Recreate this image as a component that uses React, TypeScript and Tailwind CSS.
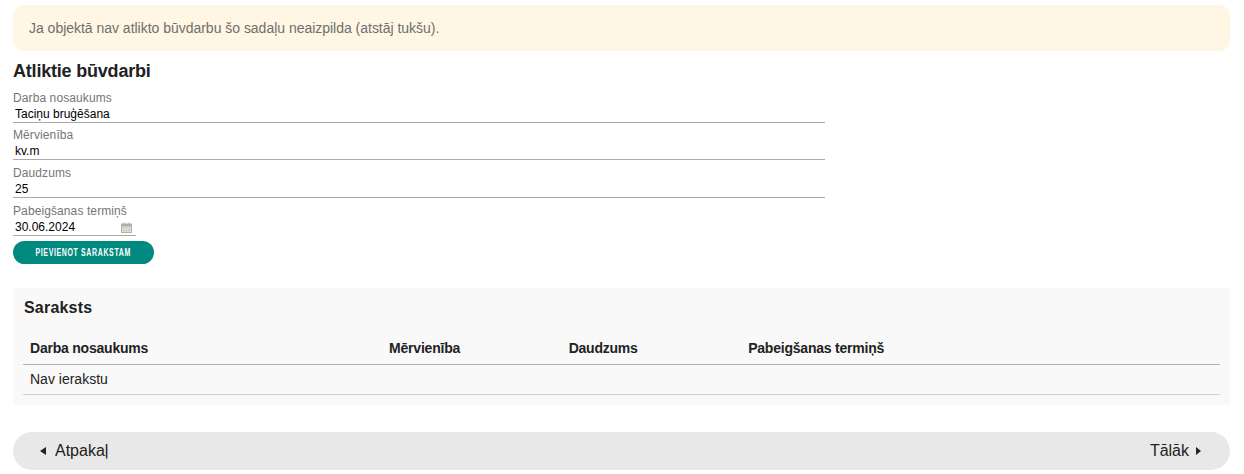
const labelCls = "block text-xs leading-[15px] tracking-[0.1px] text-[#757575]";
const inputCls = "block w-full h-[17px] border-b border-[#aaaaaa] pl-[2px] text-xs leading-[16px] text-black";

function Field({ label, value, mb }: { label: string; value: string; mb: string }) {
  return (
    <div className={mb}>
      <label className={labelCls}>{label}</label>
      <div className={inputCls}>{value}</div>
    </div>
  );
}

function CalendarIcon() {
  return (
    <svg width="11" height="11" viewBox="0 0 11 11" className="text-[#b5aea6]">
      <rect x="0.5" y="2" width="10" height="8.5" fill="#e4e0da" stroke="currentColor" />
      <rect x="0.5" y="2" width="10" height="2.5" fill="currentColor" />
      <rect x="2.5" y="0.5" width="1" height="2" fill="currentColor" />
      <rect x="7.5" y="0.5" width="1" height="2" fill="currentColor" />
      <path d="M2 6h1.5M4.75 6h1.5M7.5 6h1.5M2 8.5h1.5M4.75 8.5h1.5M7.5 8.5h1.5" stroke="currentColor" />
    </svg>
  );
}

export default function App() {
  const columns = [
    { label: "Darba nosaukums", width: "w-[30%]" },
    { label: "Mērvienība", width: "w-[15%]" },
    { label: "Daudzums", width: "w-[15%]" },
    { label: "Pabeigšanas termiņš", width: "w-[40%]" },
  ];

  return (
    <div className="w-[1244px] h-[474px] overflow-hidden bg-white pt-[5px] pr-[14px] pl-[13px] font-['Liberation_Sans',Arial,sans-serif]">
      <div className="h-[46px] rounded-[10px] bg-[#fff6e3] pl-4 text-sm leading-[46px] tracking-[-0.02px] text-[#6f6f6f]">
        Ja objektā nav atlikto būvdarbu šo sadaļu neaizpilda (atstāj tukšu).
      </div>

      <h2 className="mt-[9px] text-lg leading-[22px] font-bold tracking-[-0.2px] text-[#222222]">Atliktie būvdarbi</h2>

      <div className="mt-[9px] w-[812px]">
        <Field label="Darba nosaukums" value="Taciņu bruģēšana" mb="mb-[5px]" />
        <Field label="Mērvienība" value="kv.m" mb="mb-[6px]" />
        <Field label="Daudzums" value="25" mb="mb-[6px]" />
      </div>

      <div className="w-[123px]">
        <label className={labelCls}>Pabeigšanas termiņš</label>
        <div className="flex h-[17px] items-center justify-between border-b border-[#aaaaaa] pr-[4px] pl-[2px] text-xs leading-[16px] text-black">
          <span>30.06.2024</span>
          <CalendarIcon />
        </div>
      </div>

      <button className="mt-[5px] block h-[23px] w-[141px] rounded-full bg-[#00897f] text-center text-[10px] leading-[21px] font-bold tracking-[0.9px] text-white">
        <span className="inline-block scale-x-[0.7] whitespace-nowrap">PIEVIENOT SARAKSTAM</span>
      </button>

      <section className="mt-6 h-[117px] bg-[#f9f9f9] px-[10px] pt-[10px]">
        <h3 className="pl-px text-base leading-[20px] font-bold tracking-[0.2px] text-[#222222]">Saraksts</h3>
        <table className="mt-[19px] w-full table-fixed border-collapse text-sm text-[#222222]">
          <thead>
            <tr className="h-[27px] border-b border-[#b4b4b4]">
              {columns.map((c) => (
                <th key={c.label} className={`${c.width} pl-[7px] pb-[5px] text-left font-bold tracking-[-0.22px]`}>
                  {c.label}
                </th>
              ))}
            </tr>
          </thead>
          <tbody>
            <tr className="h-[30px] border-b border-[#d2d2d2]">
              <td colSpan={4} className="pl-[7px] align-middle">Nav ierakstu</td>
            </tr>
          </tbody>
        </table>
      </section>

      <nav className="mt-[27px] flex h-[38px] items-center justify-between rounded-full bg-[#e8e8e8] pr-[29px] pl-[27px] text-base text-[#222222]">
        <a className="flex items-center">
          <span className="mr-[9px] h-0 w-0 border-y-[4px] border-r-[6px] border-y-transparent border-r-[#222222]" />
          Atpakaļ
        </a>
        <a className="flex items-center">
          Tālāk
          <span className="ml-[7px] h-0 w-0 border-y-[4px] border-l-[5px] border-y-transparent border-l-[#222222]" />
        </a>
      </nav>
    </div>
  );
}
